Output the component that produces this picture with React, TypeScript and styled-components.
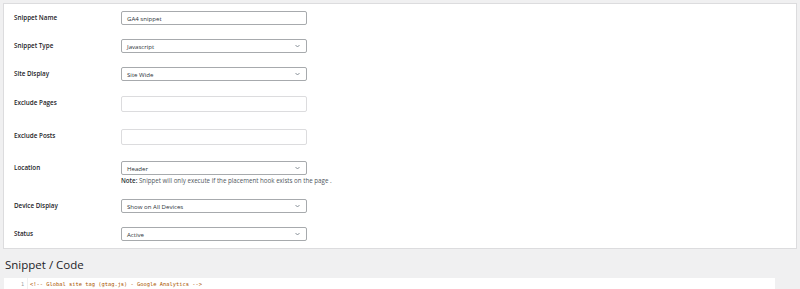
import React from "react";
import styled, { createGlobalStyle } from "styled-components";

const GlobalStyle = createGlobalStyle`
  html, body {
    margin: 0;
    padding: 0;
    background: #f0f0f1;
  }
  body {
    font-family: "Open Sans", "Noto Sans", sans-serif;
    color: #1d2327;
    overflow: hidden;
  }
`;

const Page = styled.div`
  padding: 3px 3px 0 3px;
`;

const Card = styled.div`
  background: #fff;
  border: 1px solid #dcdcde;
  padding: 0 10px;
`;

const Row = styled.div<{ $spaced?: boolean }>`
  display: grid;
  grid-template-columns: 107px 186px;
  align-items: start;
  padding: ${({ $spaced }) => ($spaced ? "8px 0 9px" : "7px 0")};
`;

const Label = styled.div`
  font-size: 6.3px;
  font-weight: 600;
  line-height: 14px;
  color: #1d2327;
`;

const Field = styled.div`
  display: flex;
  flex-direction: column;
`;

const Box = styled.div<{ $tall?: boolean }>`
  box-sizing: border-box;
  height: ${({ $tall }) => ($tall ? "16px" : "14px")};
  border: 1px solid #a7aaad;
  border-color: ${({ $tall }) => ($tall ? "#dcdcde" : "#a7aaad")};
  border-radius: 2px;
  background: #fff;
  display: flex;
  align-items: center;
  justify-content: space-between;
  padding: 0 6px 0 5px;
  font-size: 6.1px;
  color: #2c3338;
`;

const Chevron = styled.svg`
  width: 5px;
  height: 4px;
  flex: none;
`;

const Note = styled.p`
  margin: 2px 0 0;
  font-size: 6.2px;
  line-height: 8px;
  color: #50575e;
  white-space: nowrap;

  strong {
    font-weight: 600;
    color: #2c3338;
  }
`;

const Heading = styled.h2`
  margin: 0;
  padding: 8px 2px 0;
  font-size: 11.5px;
  font-weight: 400;
  line-height: 16px;
  color: #1d2327;
`;

const CodeBox = styled.div`
  margin: 5px 22px 0 1px;
  background: #fff;
  display: flex;
  height: 20px;
`;

const Gutter = styled.div`
  width: 20px;
  text-align: right;
  padding: 2px 3px 0 0;
  font-family: "DejaVu Sans Mono", monospace;
  font-size: 5.2px;
  line-height: 9px;
  color: #999;
  border-right: 1px solid #f0f0f0;
`;

const CodeLine = styled.pre`
  margin: 0;
  padding: 2px 0 0 2px;
  font-family: "DejaVu Sans Mono", monospace;
  font-size: 5.4px;
  line-height: 9px;
  color: #a50;
`;

function Select({ value }: { value: string }) {
  return (
    <Box>
      <span>{value}</span>
      <Chevron viewBox="0 0 5 4">
        <path d="M0.5 1 L2.5 3 L4.5 1" fill="none" stroke="#6c7781" strokeWidth="0.8" />
      </Chevron>
    </Box>
  );
}

function App() {
  return (
    <Page>
      <GlobalStyle />
      <Card>
        <Row>
          <Label>Snippet Name</Label>
          <Box>GA4 snippet</Box>
        </Row>
        <Row>
          <Label>Snippet Type</Label>
          <Select value="Javascript" />
        </Row>
        <Row>
          <Label>Site Display</Label>
          <Select value="Site Wide" />
        </Row>
        <Row $spaced>
          <Label>Exclude Pages</Label>
          <Box $tall />
        </Row>
        <Row $spaced>
          <Label>Exclude Posts</Label>
          <Box $tall />
        </Row>
        <Row>
          <Label>Location</Label>
          <Field>
            <Select value="Header" />
            <Note>
              <strong>Note:</strong> Snippet will only execute if the placement hook exists on the page .
            </Note>
          </Field>
        </Row>
        <Row>
          <Label>Device Display</Label>
          <Select value="Show on All Devices" />
        </Row>
        <Row>
          <Label>Status</Label>
          <Select value="Active" />
        </Row>
      </Card>
      <Heading>Snippet / Code</Heading>
      <CodeBox>
        <Gutter>1</Gutter>
        <CodeLine>{"<!-- Global site tag (gtag.js) - Google Analytics -->"}</CodeLine>
      </CodeBox>
    </Page>
  );
}

export default App;
